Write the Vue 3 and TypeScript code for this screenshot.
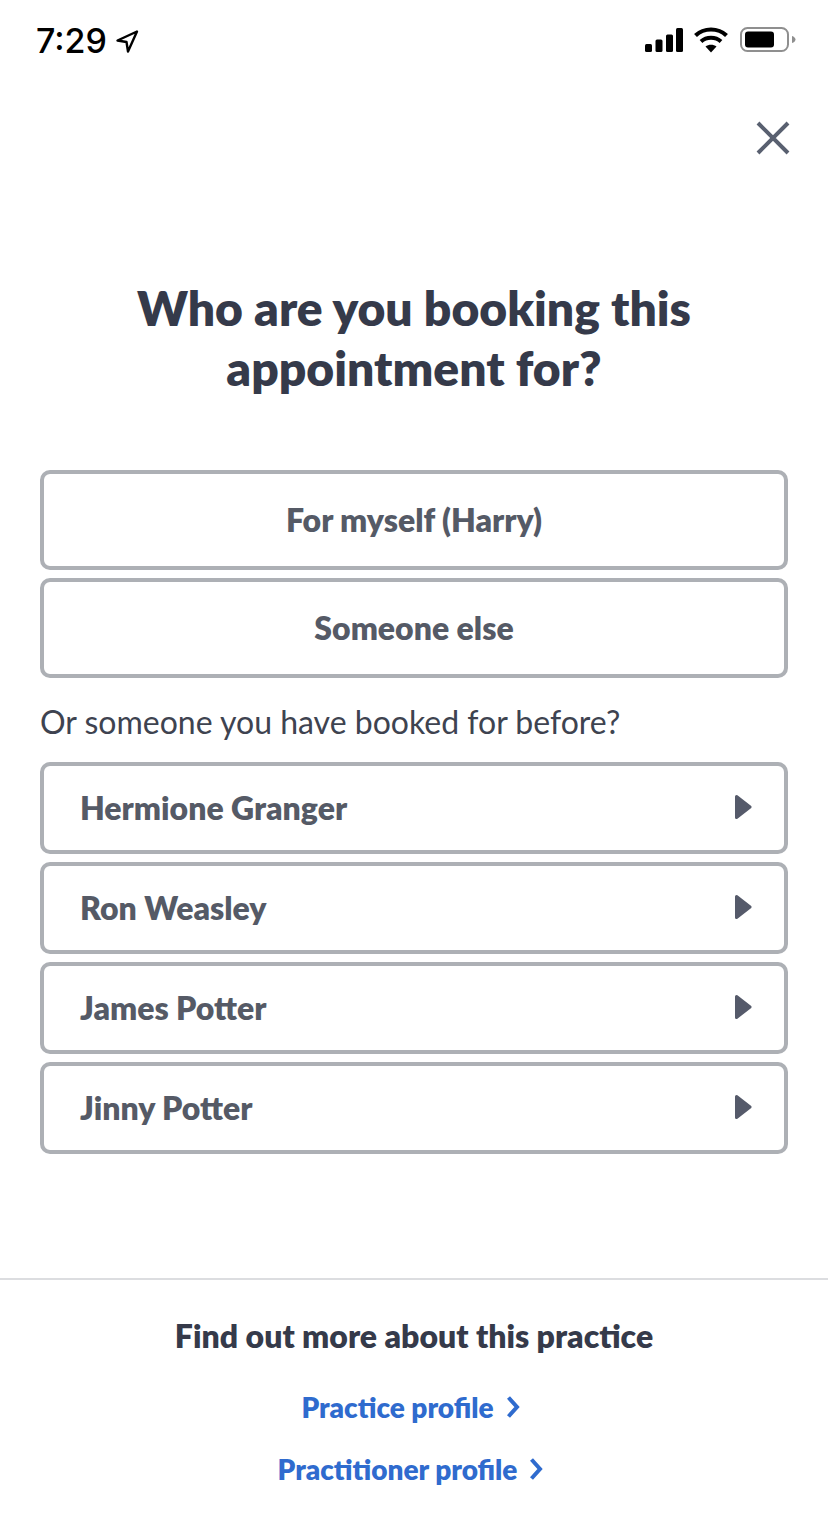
<script setup lang="ts">
const people: string[] = ['Hermione Granger', 'Ron Weasley', 'James Potter', 'Jinny Potter']
const links: string[] = ['Practice profile', 'Practitioner profile']
</script>

<template>
  <div class="page">
    <header class="status">
      <div class="time">
        <span>7:29</span>
        <svg class="loc" width="24" height="24" viewBox="0 0 24 24">
          <path d="M22 2.5 2.5 11.5l9 1.5 1.5 9.5z" fill="none" stroke="#000" stroke-width="2.4" stroke-linejoin="round" />
        </svg>
      </div>
      <div class="indicators">
        <svg width="40" height="24" viewBox="0 0 40 24">
          <rect x="1" y="16" width="7" height="8" rx="1.5" />
          <rect x="11.5" y="11.5" width="7" height="12.5" rx="1.5" />
          <rect x="22" y="6.5" width="7" height="17.5" rx="1.5" />
          <rect x="32" y="0" width="7" height="24" rx="1.5" />
        </svg>
        <svg width="34" height="26" viewBox="0 0 34 26">
          <path d="M1.5 8.5C10 .5 24 .5 32.500 8.500" fill="none" stroke="#000" stroke-width="4.200" />
          <path d="M7 14.500C12.500 9.500 21.500 9.500 27 14.500" fill="none" stroke="#000" stroke-width="4" />
          <path d="M11.500 19.500C14.500 17 19.500 17 22.500 19.500L17 25.500Z" />
        </svg>
        <svg width="56" height="26" viewBox="0 0 56 26">
          <rect x="1" y="1" width="47" height="23" rx="6.500" fill="none" stroke="#8f8f8f" stroke-width="2" />
          <rect x="5" y="4.500" width="29" height="16" rx="3" />
          <path d="M52 9c2 .5 3.500 2 3.500 3.500S54 15.500 52 16z" fill="#8f8f8f" />
        </svg>
      </div>
    </header>

    <main class="content">
      <div class="close-row">
        <svg width="34" height="34" viewBox="0 0 34 34">
          <path d="M2 2 32 32M32 2 2 32" stroke="#596070" stroke-width="4" fill="none" />
        </svg>
      </div>
      <h1>Who are you booking this<br />appointment for?</h1>
      <div class="choices">
        <button class="choice">For myself (Harry)</button>
        <button class="choice">Someone else</button>
      </div>
      <p class="prompt">Or someone you have booked for before?</p>
      <div class="people">
        <button v-for="person in people" :key="person" class="person">
          <span>{{ person }}</span>
          <svg width="18" height="26" viewBox="0 0 18 26">
            <path d="M2.500 2.500 16 13 2.500 23.500Z" fill="#555a6a" stroke="#555a6a" stroke-width="3" stroke-linejoin="round" />
          </svg>
        </button>
      </div>
    </main>

    <footer class="footer">
      <h2>Find out more about this practice</h2>
      <a v-for="link in links" :key="link" class="link">
        <span>{{ link }}</span>
        <svg width="14" height="24" viewBox="0 0 14 24">
          <path d="M2.500 2.500 11 12 2.500 21.500" fill="none" stroke="#2f6bce" stroke-width="4" />
        </svg>
      </a>
    </footer>
  </div>
</template>

<style>
body { margin: 0; background: #fff; }
</style>

<style scoped>
.page {
  width: 828px;
  height: 1522px;
  display: flex;
  flex-direction: column;
  background: #fff;
  font-family: Lato, "Liberation Sans", sans-serif;
  color: #353a4a;
  overflow: hidden;
}
.status {
  height: 80px;
  box-sizing: border-box;
  padding: 0 32px 0 36px;
  display: flex;
  justify-content: space-between;
  align-items: center;
  flex-shrink: 0;
}
.time {
  display: flex;
  align-items: center;
  gap: 8px;
  font-family: Inter, "Liberation Sans", sans-serif;
  font-size: 34px;
  font-weight: 500;
  color: #000;
}
.loc { margin-top: 2px; }
.indicators {
  display: flex;
  align-items: center;
  gap: 10px;
  fill: #000;
}
.indicators svg:last-child { margin-left: 2px; }
.content {
  flex: 1;
  padding: 0 40px;
  display: flex;
  flex-direction: column;
}
.close-row {
  display: flex;
  justify-content: flex-end;
  padding: 41px 0 0;
  height: 34px;
  margin-right: -2px;
  margin-bottom: 1px;
}
h1 {
  margin: 122px 0 0;
  font-size: 48px;
  line-height: 60px;
  font-weight: 800;
  text-align: center;
  color: #353a4a;
}
.choices {
  margin-top: 72px;
  display: flex;
  flex-direction: column;
  gap: 8px;
}
button {
  font-family: inherit;
  background: #fff;
  border: 4px solid #adb0b5;
  border-radius: 10px;
  color: #555a66;
  font-size: 32px;
  font-weight: 800;
  box-sizing: border-box;
  width: 100%;
  padding: 0 0 2px;
}
.choice { height: 100px; }
.prompt {
  margin: 25px 0 21px;
  font-size: 32px;
  line-height: 38px;
  color: #3e4350;
}
.people {
  display: flex;
  flex-direction: column;
  gap: 8px;
}
.person {
  height: 92px;
  display: flex;
  align-items: center;
  justify-content: space-between;
  padding: 0 32px 2px 36px;
}
.footer {
  height: 244px;
  flex-shrink: 0;
  box-sizing: border-box;
  border-top: 2px solid #dcdde0;
  display: flex;
  flex-direction: column;
  align-items: center;
}
h2 {
  margin: 36px 0 0;
  font-size: 32px;
  line-height: 40px;
  font-weight: 800;
  color: #353a4a;
}
.link {
  display: flex;
  align-items: center;
  gap: 12px;
  height: 40px;
  margin-top: 22px;
  padding-right: 7px;
  color: #2f6bce;
  font-size: 28px;
  font-weight: 800;
}
h2 + .link { margin-top: 31px; }
</style>
